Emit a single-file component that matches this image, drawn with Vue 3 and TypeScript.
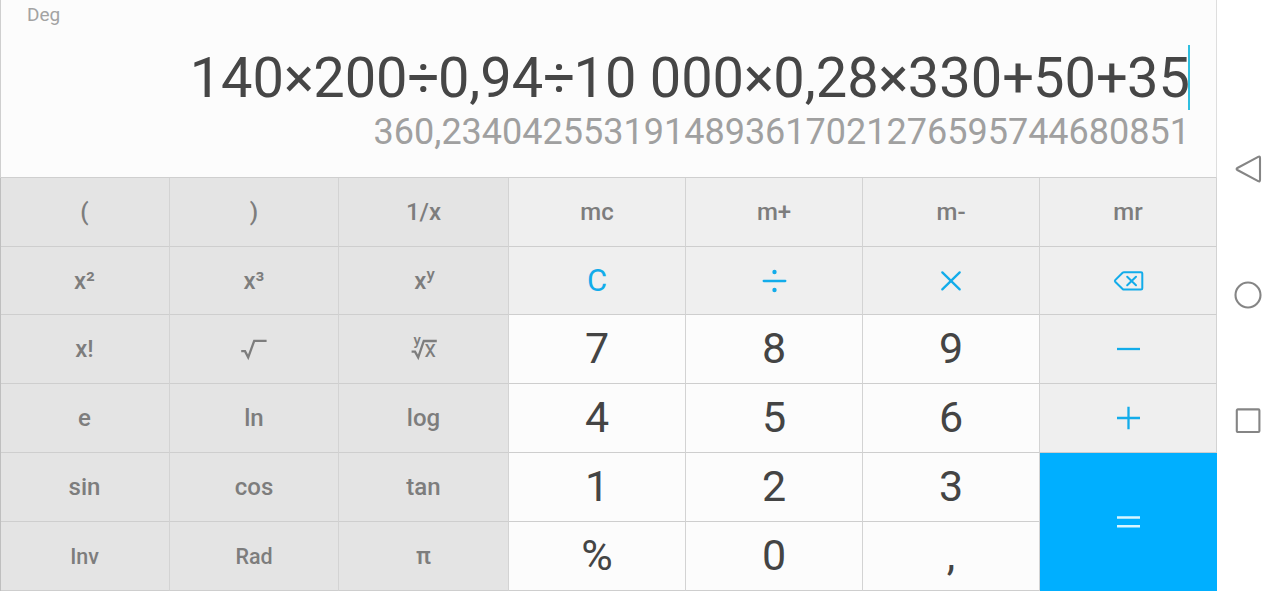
<script setup lang="ts">
import { computed, ref } from "vue";

type Kind = "fn" | "mem" | "op" | "num" | "eq";

interface Key {
  label: string;
  kind: Kind;
  icon?: string;
  sup?: string;
  small?: boolean;
}

const fn = (label: string, extra: Partial<Key> = {}): Key => ({ label, kind: "fn", ...extra });
const mem = (label: string): Key => ({ label, kind: "mem" });
const num = (label: string): Key => ({ label, kind: "num" });
const op = (label: string, icon?: string): Key => ({ label, kind: "op", icon });

const mode = ref("Deg");
const expression = ref("140×200÷0,94÷10 000×0,28×330+50+35");
const result = ref("360,2340425531914893617021276595744680851");

// Operators are set a little tighter than digits
const tokens = computed(() => expression.value.split(/([×÷+ ])/));

function tokenClass(token: string) {
  if (token === "÷") return "tight";
  return /^[×+ ]$/.test(token) ? "snug" : "";
}

const keys: Key[] = [
  fn("("), fn(")"), fn("1/x"), mem("mc"), mem("m+"), mem("m-"), mem("mr"),
  fn("x²"), fn("x³"), fn("x", { sup: "y" }), op("C"), op("÷", "divide"), op("×", "times"), op("⌫", "back"),
  fn("x!"), fn("√", { icon: "sqrt" }), fn("y√x", { icon: "root" }), num("7"), num("8"), num("9"), op("−", "minus"),
  fn("e"), fn("ln"), fn("log"), num("4"), num("5"), num("6"), op("+", "plus"),
  fn("sin"), fn("cos"), fn("tan"), num("1"), num("2"), num("3"), { label: "=", kind: "eq", icon: "equals" },
  fn("Inv", { small: true }), fn("Rad", { small: true }), fn("π"), num("%"), num("0"), num(","),
];
</script>

<template>
  <div class="screen">
    <main class="calc">
      <header class="display">
        <div class="mode">{{ mode }}</div>
        <div class="expression">
          <span class="expression-text"><span v-for="(token, i) in tokens" :key="i" :class="tokenClass(token)">{{ token }}</span></span>
          <span class="caret"></span>
        </div>
        <div class="result">{{ result }}</div>
      </header>

      <div class="keys">
        <button
          v-for="key in keys"
          :key="key.label"
          class="key"
          :class="[key.kind, { small: key.small }]"
          :aria-label="key.label"
        >
          <svg v-if="key.icon === 'divide'" class="icon" viewBox="0 0 32 32">
            <path d="M5.7 16H27.3" />
            <circle class="dot" cx="16.5" cy="7" r="2.2" />
            <circle class="dot" cx="16.5" cy="25" r="2.2" />
          </svg>
          <svg v-if="key.icon === 'times'" class="icon" viewBox="0 0 32 32">
            <path d="M7.3 7.4L24.7 24.4M24.7 7.4L7.3 24.4" />
          </svg>
          <svg v-if="key.icon === 'back'" class="icon thin" viewBox="0 0 32 32">
            <path d="M12 7.2H29Q30.3 7.2 30.3 8.5V23.3Q30.3 24.6 29 24.6H12Q11.2 24.6 10.6 24L3.2 16.7Q2.5 15.9 3.2 15.1L10.6 7.8Q11.2 7.2 12 7.2Z" />
            <path d="M15.2 11.7L24 20.3M24 11.7L15.2 20.3" />
          </svg>
          <svg v-if="key.icon === 'minus'" class="icon" viewBox="0 0 32 32">
            <path class="flat" d="M5 16H28" />
          </svg>
          <svg v-if="key.icon === 'plus'" class="icon" viewBox="0 0 32 32">
            <path class="flat" d="M5 16H28M16.5 4.8V27.2" />
          </svg>
          <svg v-if="key.icon === 'equals'" class="icon wide" viewBox="0 0 32 32">
            <path class="flat" d="M4 11.5H27M4 20.3H27" />
          </svg>
          <svg v-if="key.icon === 'sqrt'" class="icon" viewBox="0 0 32 32">
            <path class="flat" d="M3.2 18.2H7L10.2 24.4L16.2 7.8H28.6" />
          </svg>
          <svg v-if="key.icon === 'root'" class="icon" viewBox="0 0 32 32">
            <path class="flat" d="M3.6 18.6H7L10.2 24.4L15.8 8H28.8" />
            <text x="5.4" y="12" class="index">y</text>
            <text x="16.6" y="24" class="radicand">x</text>
          </svg>
          <span v-if="!key.icon">{{ key.label }}<sup v-if="key.sup">{{ key.sup }}</sup></span>
        </button>
      </div>
    </main>

    <nav class="navbar">
      <svg viewBox="0 0 32 32" class="nav-icon">
        <path d="M26.2 3.9Q28 3 28 5V27Q28 29 26.2 28.1L5.4 17Q3.8 16 5.4 15Z" />
      </svg>
      <svg viewBox="0 0 32 32" class="nav-icon">
        <circle cx="16" cy="16" r="12.5" />
      </svg>
      <svg viewBox="0 0 32 32" class="nav-icon">
        <rect x="4.8" y="4.4" width="22.6" height="22.6" rx="1" />
      </svg>
    </nav>
  </div>
</template>

<style>
body {
  margin: 0;
  background: #fff;
}
</style>

<style scoped>
.screen {
  display: flex;
  width: 1280px;
  height: 591px;
  overflow: hidden;
  background: #fff;
  font-family: Roboto, "Liberation Sans", sans-serif;
}
.calc {
  display: flex;
  flex-direction: column;
  width: 1217px;
}
.display {
  box-sizing: border-box;
  height: 178px;
  padding: 4px 26px 0;
  border: 1px solid #cfcfcf;
  border-top: 0;
  border-right-color: #dedede;
  background: #fcfcfc;
}
.mode {
  height: 41px;
  color: #a3a3a3;
  font-size: 19px;
  line-height: 22px;
}
.expression {
  display: flex;
  justify-content: flex-end;
  height: 66px;
  color: #464646;
  font-size: 56px;
  line-height: 66px;
  white-space: pre;
}
.tight {
  letter-spacing: -1.7px;
}
.snug {
  letter-spacing: -0.8px;
}
.caret {
  flex: none;
  width: 2px;
  height: 65px;
  margin-left: -2px;
  background: #2fbfe0;
}
.result {
  height: 42px;
  color: #a0a0a0;
  font-size: 36px;
  line-height: 42px;
  text-align: right;
  white-space: nowrap;
}
.keys {
  display: grid;
  grid-template-columns: 169px 169px 170px repeat(4, 177px);
  grid-template-rows: 69px 68px repeat(4, 69px);
  border-left: 1px solid #bfbfbf;
}
.key {
  display: flex;
  align-items: center;
  justify-content: center;
  margin: 0;
  padding: 0;
  border: 0;
  border-right: 1px solid #d3d3d3;
  border-bottom: 1px solid #cecece;
  border-radius: 0;
  color: #7d7d7d;
  font-family: inherit;
  font-size: 24px;
  font-weight: 500;
}
.fn {
  background: #e4e4e4;
}
.fn:nth-child(7n + 1) {
  padding-right: 1px;
}
.mem {
  background: #efefef;
}
.op {
  background: #efefef;
  color: #12acea;
  font-size: 31px;
  font-weight: 400;
}
.num {
  padding-bottom: 2px;
  background: #fcfcfc;
  color: #444;
  font-size: 43px;
  font-weight: 400;
}
.eq {
  grid-column: 7;
  grid-row: 5 / span 2;
  border: 0;
  background: #00afff;
  color: #d8f6ff;
}
.small {
  font-size: 21.5px;
}
sup {
  margin-right: -2px;
  font-size: 17px;
  line-height: 0;
  vertical-align: 9px;
}
.icon {
  width: 32px;
  height: 32px;
  overflow: visible;
  fill: none;
  stroke: currentColor;
  stroke-width: 2.3;
  stroke-linecap: round;
}
.thin {
  stroke-width: 2;
}
.wide {
  stroke-width: 2.6;
}
.flat {
  stroke-linecap: butt;
}
.dot {
  fill: currentColor;
  stroke: none;
}
.index,
.radicand {
  fill: currentColor;
  stroke: none;
  font-weight: 500;
}
.index {
  font-size: 15px;
}
.radicand {
  font-size: 23px;
  font-weight: 400;
}
.navbar {
  display: flex;
  flex-direction: column;
  align-items: center;
  gap: 94px;
  flex: 1;
  padding: 153px 2px 0 0;
}
.nav-icon {
  width: 32px;
  height: 32px;
  fill: none;
  stroke: #858585;
  stroke-width: 2.1;
}
</style>
